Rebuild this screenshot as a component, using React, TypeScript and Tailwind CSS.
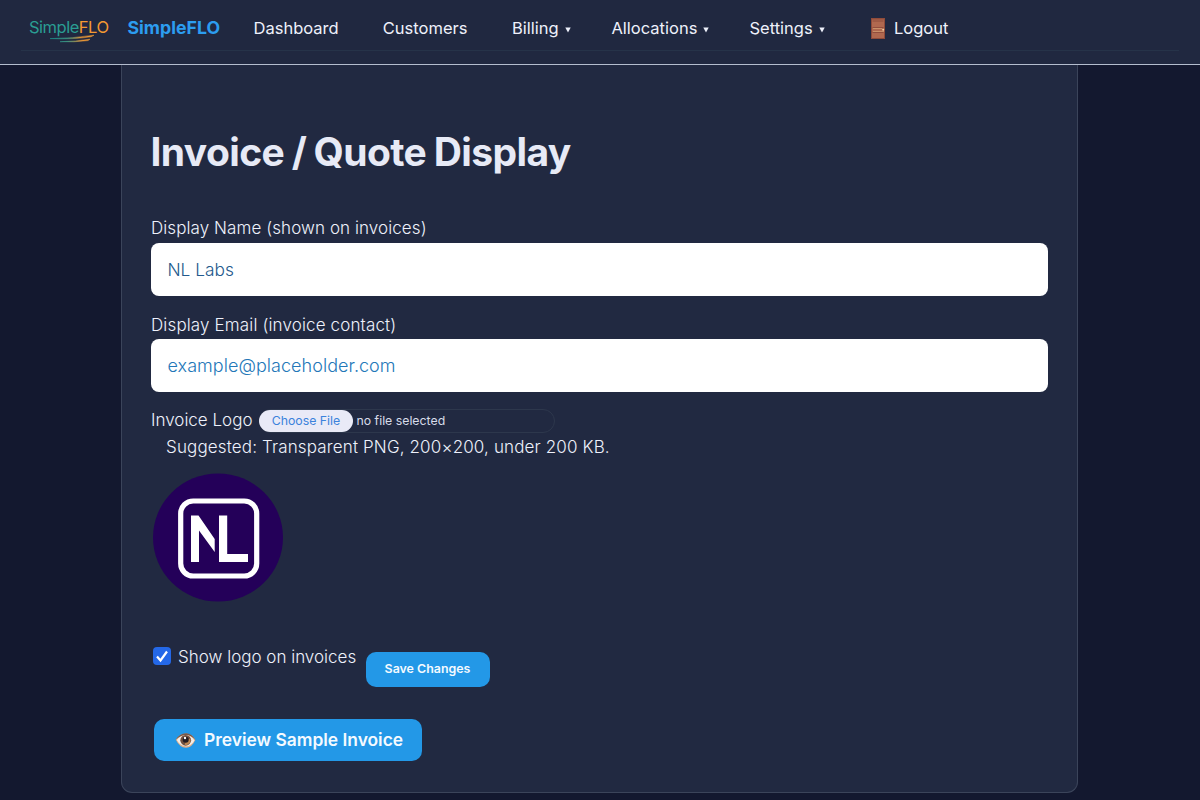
import type { ReactNode } from "react";

function BrandMark() {
  return (
    <svg width="82" height="30" viewBox="0 0 82 30" className="block shrink-0" aria-hidden="true">
      <defs>
        <linearGradient id="swoosh" x1="20" x2="68" y1="0" y2="0" gradientUnits="userSpaceOnUse">
          <stop offset="0" stopColor="#149a94" />
          <stop offset="0.4" stopColor="#3fa08a" />
          <stop offset="0.7" stopColor="#f09a35" />
        </linearGradient>
      </defs>
      <text x="1" y="19" fontFamily="Inter, sans-serif" fontSize="16.5" fontWeight="400" textLength="80" lengthAdjust="spacing" fill="#2a9d93">Simple<tspan fill="#f59a32">FLO</tspan></text>
      <path d="M22 24.600Q45 24.400 66 21.200L63 22.800Q45 25.600 22 24.600Z M32 27.700Q48 27.400 62 25.200L60 26.600Q46 28.400 32 27.700Z" fill="url(#swoosh)" stroke="url(#swoosh)" strokeWidth="0.5" />
    </svg>
  );
}

function Door() {
  return (
    <svg width="14" height="21" viewBox="0 0 14 21" className="block shrink-0" aria-hidden="true">
      <rect width="14" height="21" fill="#8f4b3a" />
      <rect x="1" y="1.5" width="12" height="18.500" fill="#b0684f" />
      <path d="M1.500 3h11M1.500 9.500h11M1.500 14.500h11" stroke="#8d4b3b" strokeWidth="0.9" />
      <path d="M2 10.500h9M2 13.500h11" stroke="#cf9a70" strokeWidth="0.8" />
      <circle cx="12.200" cy="11.700" r="1" fill="#f1d0a0" />
    </svg>
  );
}

function Eye() {
  return (
    <svg width="21" height="17" viewBox="0 0 21 17" className="block shrink-0" aria-hidden="true">
      <path d="M.8 7.8Q5 1.5 11 1.5Q17 1.8 20.3 8Q17 15.7 11 15.8Q4.5 15.5.8 7.8Z" fill="#e3b089" />
      <path d="M1.8 8Q5 3.3 11 3Q16.5 3.3 19.5 8.4Q16 14.200 11 14.200Q5 13.900 1.8 8Z" fill="#f4eee8" />
      <path d="M.8 7.8Q4.5 1.3 11 1.3Q17 1.5 20.3 8Q16 3 11 3Q5.5 3 .8 7.8Z" fill="#79594a" />
      <circle cx="10.7" cy="8.300" r="5.400" fill="#71503f" />
      <path d="M10.8 8l4.5-1.5a5 5 0 0 1-5.5 6.5z" fill="#bd8550" />
      <circle cx="10.7" cy="7.8" r="3" fill="#231b20" />
      <circle cx="10" cy="6" r="1.2" fill="#fff" />
    </svg>
  );
}

function CompanyLogo() {
  return (
    <svg width="130" height="130" viewBox="0 0 130 130" className="ml-[2px] block" aria-label="NL">
      <ellipse cx="65" cy="64.5" rx="65" ry="64" fill="#240059" />
      <rect x="27.7" y="28" width="76" height="75" rx="12.5" fill="none" stroke="#fff" strokeWidth="5.200" />
      <path d="M38 42.500h7.500L61.700 66v13L46 57.500V89H38z" fill="#fff" />
      <path d="M66 42.500h8.200V81h20.800v8H66z" fill="#fff" />
    </svg>
  );
}

function Menu({ children, className }: { children: ReactNode; className: string }) {
  return (
    <a className={`flex shrink-0 items-center whitespace-nowrap ${className}`}>
      <span>{children}</span>
      <svg width="6" height="6" viewBox="0 0 6 6" className="ml-[6px] mt-[3px]" aria-hidden="true">
        <path d="M.3.5h5.400L3 5.500z" fill="currentColor" />
      </svg>
    </a>
  );
}

export default function App() {
  return (
    <div className="flex h-[800px] w-[1200px] flex-col overflow-hidden bg-[#13182f] font-[Inter,'Liberation_Sans',sans-serif] text-[17px] font-[350] text-[#eef1fb]">
      <header className="h-[65px] shrink-0 border-b border-[#b4bdce] bg-[#202840] px-[21px]">
        <nav className="flex h-[51px] items-center border-b border-[#263349] pt-[7px] text-[16.5px] font-normal">
          <div className="ml-[7px] w-[99.5px]"><BrandMark /></div>
          <a className="w-[126px] text-[17.7px] font-bold text-[#2c9df0]">SimpleFLO</a>
          <a className="w-[129.3px]">Dashboard</a>
          <a className="w-[129.2px]">Customers</a>
          <Menu className="w-[99.5px]">Billing</Menu>
          <Menu className="w-[138px]">Allocations</Menu>
          <Menu className="w-[121.5px]">Settings</Menu>
          <a className="flex items-center gap-[9px]"><Door /><span>Logout</span></a>
        </nav>
      </header>

      <main className="ml-[121px] h-[728px] w-[957px] rounded-b-[11px] border border-t-0 border-[#3b445a] bg-[#212941] px-[29px] pt-[63px]">
        <h1 className="-ml-[0.5px] h-[48px] whitespace-nowrap text-[39px] font-bold leading-[48px] tracking-[-0.6px] [word-spacing:-1.2px] text-[#e7eaf6]">Invoice / Quote Display</h1>

        <form className="mt-[39px] flex flex-col">
          <label className="flex h-[28px] items-center pb-[1px] tracking-[0.08px]">Display Name (shown on invoices)</label>
          <div className="flex h-[53px] w-[897px] items-center rounded-[8px] bg-white pl-[16.5px] text-[17.3px] text-[#23598c]">NL Labs</div>
          <label className="mt-[15px] flex h-[28px] items-center pt-px tracking-[0.14px]">Display Email (invoice contact)</label>
          <div className="flex h-[53px] w-[897px] items-center rounded-[8px] bg-white pl-[16.5px] text-[18px] tracking-[0.04px] text-[#2377b8]">example@placeholder.com</div>

          <div className="mt-[17px] flex h-[24px] items-center">
            <span className="w-[108px] pb-[1px]">Invoice Logo</span>
            <div className="flex h-[24px] w-[296px] items-center rounded-full border border-[#2d374c] text-[12.3px] font-normal">
              <span className="-ml-px flex h-[22px] w-[94px] items-center justify-center rounded-full bg-[#e9eaf7] pt-px text-[#3b82dc]">Choose File</span>
              <span className="ml-[3.5px] pt-px text-[#d8dcea]">no file selected</span>
            </div>
          </div>
          <p className="ml-[15px] flex h-[28px] items-center pt-[2px] tracking-[0.14px]">Suggested: Transparent PNG, 200×200, under 200 KB.</p>
          <div className="mt-[12px]"><CompanyLogo /></div>

          <div className="mt-[43px] flex h-[41px] items-start">
            <span className="ml-[2px] mt-[1px] flex size-[18px] items-center justify-center rounded-[4px] bg-[#2468e8]">
              <svg width="14" height="14" viewBox="0 0 14 14" aria-hidden="true"><path d="M2 7.500L5.500 11.500L12 2.500" fill="none" stroke="white" strokeWidth="2.200" /></svg>
            </span>
            <span className="-mt-px ml-[7px] w-[187.5px]">Show logo on invoices</span>
            <button type="button" className="mt-[5.5px] h-[35.5px] w-[124px] rounded-[10px] bg-[#2398e7] text-[12.4px] font-semibold text-[#f4faff]">Save Changes</button>
          </div>
          <button type="button" className="ml-[3px] mt-[32px] flex h-[41.5px] w-[267.5px] items-center rounded-[10px] bg-[#2398e7] pl-[21px] pt-px text-[17.4px] font-semibold text-[#f4faff]">
            <Eye /><span className="ml-[8px]">Preview Sample Invoice</span>
          </button>
        </form>
      </main>
    </div>
  );
}
